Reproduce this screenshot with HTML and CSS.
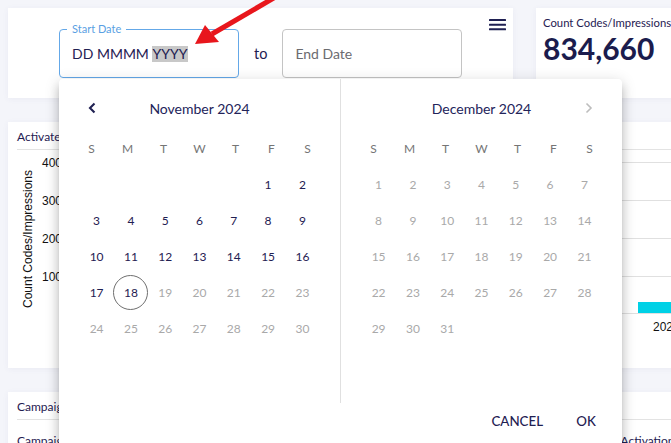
FILE: index.html
```html
<!DOCTYPE html>
<html lang="en">
<head>
<meta charset="utf-8">
<title>Dashboard – Date range</title>
<link rel="stylesheet" href="styles.css">
</head>
<body>
<div class="page">
  <div class="top-row">
    <div class="card filter-card">
      <div class="date-range">
        <div class="field field-active">
          <span class="field-label">Start Date</span>
          <span class="field-value">DD MMMM <span class="sel">YYYY</span></span>
        </div>
        <span class="to">to</span>
        <div class="field">
          <span class="placeholder">End Date</span>
        </div>
      </div>
      <svg class="menu" width="17" height="12" viewBox="0 0 17 12" aria-hidden="true">
        <rect x="0" y="0" width="17" height="2" rx="0.5"/>
        <rect x="0" y="4.7" width="17" height="2" rx="0.5"/>
        <rect x="0" y="9.3" width="17" height="2" rx="0.5"/>
      </svg>
    </div>
    <div class="card stat-card">
      <div class="stat-label">Count Codes/Impressions</div>
      <div class="stat-value">834,660</div>
    </div>
  </div>

  <div class="card chart-card">
    <div class="card-title">Activated Codes/Impressions</div>
    <svg class="chart" width="720" height="218" viewBox="0 0 720 218">
      <text class="axis-title" transform="translate(24 89) rotate(-90)" text-anchor="middle">Count Codes/Impressions</text>
      <text class="tick" x="34" y="16.5">400</text>
      <text class="tick" x="34" y="54.5">300</text>
      <text class="tick" x="34" y="92.5">200</text>
      <text class="tick" x="34" y="130.5">100</text>
      <line class="grid" x1="60" y1="12.5" x2="720" y2="12.5"/>
      <line class="grid" x1="60" y1="50.5" x2="720" y2="50.5"/>
      <line class="grid" x1="60" y1="88.5" x2="720" y2="88.5"/>
      <line class="grid" x1="60" y1="126.5" x2="720" y2="126.5"/>
      <rect class="bar" x="630" y="152" width="90" height="12"/>
      <line class="grid" x1="60" y1="163.5" x2="720" y2="163.5"/>
      <text class="tick" x="645" y="181">2024-11</text>
    </svg>
  </div>

  <div class="card table-card">
    <div class="card-title">Campaigns</div>
    <div class="table-head">
      <span>Campaign Name</span>
      <span class="col-act">Activations</span>
    </div>
  </div>
</div>

<svg class="arrow" width="300" height="60" viewBox="0 0 300 60" aria-hidden="true">
  <line x1="212" y1="34" x2="284" y2="-8" stroke="#e8161c" stroke-width="5"/>
  <polygon points="195,44 205,25 219,42" fill="#e8161c"/>
</svg>

<div class="picker">
  <div class="months">
    <div class="month month-left">
      <div class="month-head">
        <span class="nav nav-prev">
          <svg width="10" height="12" viewBox="0 0 10 12"><path d="M7.5 1.5 L3 6 L7.5 10.5" fill="none" stroke="#1f2052" stroke-width="2.1"/></svg>
        </span>
        <span class="month-name">November 2024</span>
        <span class="nav"></span>
      </div>
      <div class="dow"><span>S</span><span>M</span><span>T</span><span>W</span><span>T</span><span>F</span><span>S</span></div>
      <div class="days">
        <span></span><span></span><span></span><span></span><span></span>
        <span class="on">1</span><span class="on">2</span>
        <span class="on">3</span><span class="on">4</span><span class="on">5</span><span class="on">6</span><span class="on">7</span><span class="on">8</span><span class="on">9</span>
        <span class="on">10</span><span class="on">11</span><span class="on">12</span><span class="on">13</span><span class="on">14</span><span class="on">15</span><span class="on">16</span>
        <span class="on">17</span><span class="on today"><i>18</i></span><span>19</span><span>20</span><span>21</span><span>22</span><span>23</span>
        <span>24</span><span>25</span><span>26</span><span>27</span><span>28</span><span>29</span><span>30</span>
      </div>
    </div>
    <div class="month">
      <div class="month-head">
        <span class="nav"></span>
        <span class="month-name">December 2024</span>
        <span class="nav nav-next">
          <svg width="10" height="12" viewBox="0 0 10 12"><path d="M2.5 1.5 L7 6 L2.5 10.5" fill="none" stroke="#bdbdbd" stroke-width="1.6"/></svg>
        </span>
      </div>
      <div class="dow"><span>S</span><span>M</span><span>T</span><span>W</span><span>T</span><span>F</span><span>S</span></div>
      <div class="days">
        <span>1</span><span>2</span><span>3</span><span>4</span><span>5</span><span>6</span><span>7</span>
        <span>8</span><span>9</span><span>10</span><span>11</span><span>12</span><span>13</span><span>14</span>
        <span>15</span><span>16</span><span>17</span><span>18</span><span>19</span><span>20</span><span>21</span>
        <span>22</span><span>23</span><span>24</span><span>25</span><span>26</span><span>27</span><span>28</span>
        <span>29</span><span>30</span><span>31</span>
      </div>
    </div>
  </div>
  <div class="actions">
    <button class="btn">CANCEL</button>
    <button class="btn">OK</button>
  </div>
</div>
</body>
</html>
```

FILE: styles.css
```css
html, body {
  margin: 0;
  padding: 0;
  overflow: hidden;
}
body {
  background: #f4f5fa;
  font-family: Lato, "Open Sans", "Noto Sans", sans-serif;
  color: #1f2052;
  width: 671px;
  height: 443px;
  position: relative;
}
.page {
  padding: 8px 0 0 8px;
  width: 760px;
}
.card {
  background: #fff;
  box-shadow: 0 1px 6px rgba(60, 70, 140, 0.06);
}
.top-row {
  display: flex;
  gap: 23px;
}
.filter-card {
  width: 505px;
  height: 90px;
  box-sizing: border-box;
  display: flex;
  align-items: flex-start;
  padding: 0 7px 0 51px;
}
.date-range {
  display: flex;
  align-items: center;
  margin-top: 21px;
}
.field {
  position: relative;
  width: 180px;
  height: 49px;
  box-sizing: border-box;
  border: 1px solid #c4c4c4;
  border-radius: 4px;
  display: flex;
  align-items: center;
  padding-left: 12px;
  font-size: 14px;
}
.field-active {
  border-color: #64a8e8;
}
.field-label {
  position: absolute;
  top: -7px;
  left: 7px;
  padding: 0 5px;
  background: #fff;
  font-size: 11px;
  line-height: 12px;
  color: #5a9fe3;
}
.field-value {
  color: #1f2052;
  line-height: 16px;
}
.sel {
  background: #c8c8c8;
  display: inline-block;
  line-height: 16px;
  padding-right: 1px;
}
.placeholder {
  color: #6b6b70;
}
.to {
  font-size: 14.5px;
  padding: 0 15px;
  color: #1f2052;
}
.menu {
  margin-top: 11px;
  margin-left: auto;
  fill: #1f2052;
}
.stat-card {
  width: 200px;
  height: 90px;
  box-sizing: border-box;
  padding: 8px 7px;
}
.stat-label {
  font-size: 11.3px;
  line-height: 14px;
  color: #1f2052;
  white-space: nowrap;
}
.stat-value {
  font-size: 30px;
  font-weight: 700;
  line-height: 34px;
  margin-top: 1px;
  color: #1b1c4d;
}
.chart-card {
  margin-top: 24px;
  height: 246px;
  width: 752px;
}
.card-title {
  margin: 0 9px;
  height: 25px;
  padding-top: 2px;
  line-height: 25px;
  font-size: 12px;
  border-bottom: 1px solid #e3e3e3;
  color: #1f2052;
}
.chart {
  display: block;
}
.axis-title, .tick {
  font-family: "Liberation Sans", Arial, sans-serif;
  font-size: 12px;
  fill: #111;
}
.grid {
  stroke: #e0e0e0;
  stroke-width: 1;
}
.bar {
  fill: #00d1e6;
}
.table-card {
  margin-top: 24px;
  height: 120px;
  width: 752px;
}
.table-head {
  display: flex;
  padding: 14px 9px 0;
  font-size: 12px;
  line-height: 14px;
}
.col-act {
  margin-left: 517px;
}
.arrow {
  position: absolute;
  left: 0;
  top: 0;
  pointer-events: none;
}
.picker {
  position: absolute;
  left: 59px;
  top: 79px;
  width: 563px;
  height: 400px;
  background: #fff;
  border-radius: 4px;
  box-shadow: 0 5px 5px -3px rgba(0,0,0,0.2), 0 8px 10px 1px rgba(0,0,0,0.14), 0 3px 14px 2px rgba(0,0,0,0.12);
}
.months {
  display: flex;
}
.month {
  width: 281px;
  height: 324px;
}
.month-left {
  border-right: 1px solid #e0e0e0;
}
.month-head {
  margin-top: 11px;
  height: 36px;
  padding: 0 13px;
  display: grid;
  grid-template-columns: 40px 1fr 40px;
  align-items: center;
}
.nav {
  display: flex;
  justify-content: center;
  align-items: center;
}
.month-name {
  text-align: center;
  font-size: 14px;
  color: #23245a;
}
.dow {
  margin-top: 4px;
  height: 36px;
  display: grid;
  grid-template-columns: repeat(7, 36px);
  justify-content: center;
  align-items: center;
  text-align: center;
  font-size: 12px;
  color: #757575;
}
.days {
  display: grid;
  grid-template-columns: repeat(7, 34.3px);
  grid-auto-rows: 36px;
  justify-content: center;
  font-size: 12px;
}
.days span {
  display: flex;
  align-items: center;
  justify-content: center;
  color: #a9a9a9;
}
.days span.on {
  color: #1f2052;
}
.days .today i {
  font-style: normal;
  flex: none;
  width: 35px;
  height: 35px;
  box-sizing: border-box;
  border: 1px solid #6f6f6f;
  border-radius: 50%;
  display: flex;
  align-items: center;
  justify-content: center;
}
.actions {
  display: flex;
  justify-content: flex-end;
  gap: 3px;
  padding-right: 4px;
  height: 36px;
}
.btn {
  font-family: Lato, "Open Sans", sans-serif;
  font-size: 13.3px;
  font-weight: 500;
  color: #1f2052;
  background: none;
  border: 0;
  padding: 0 8px;
  min-width: 64px;
  height: 36px;
  cursor: pointer;
}
```
